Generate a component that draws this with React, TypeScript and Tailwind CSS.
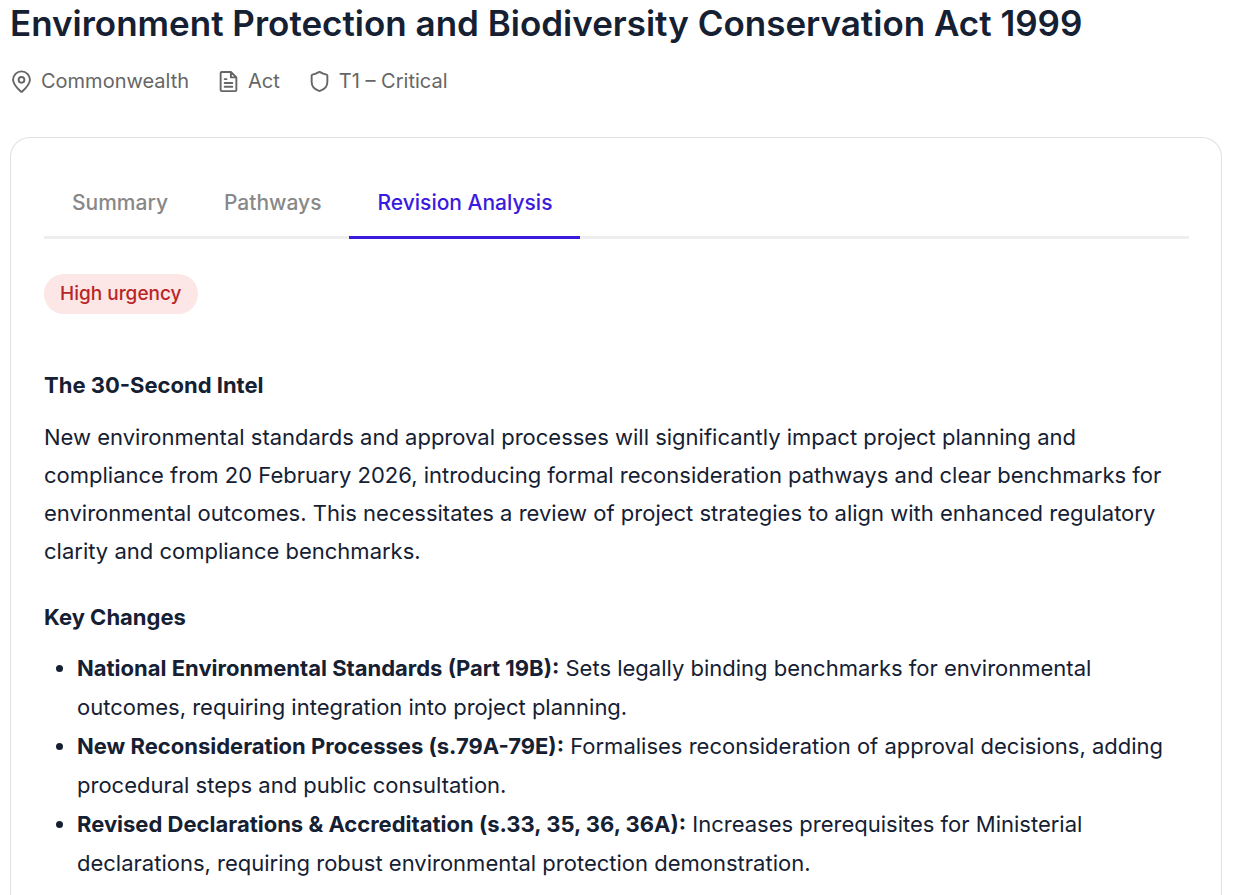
import type { ReactNode } from "react";

function Icon({ children }: { children: ReactNode }) {
  return (
    <svg
      viewBox="0 0 24 24"
      className="size-[23px] shrink-0"
      fill="none"
      stroke="currentColor"
      strokeWidth="2"
      strokeLinecap="round"
      strokeLinejoin="round"
      aria-hidden="true"
    >
      {children}
    </svg>
  );
}

const meta = [
  {
    label: "Commonwealth",
    icon: (
      <Icon>
        <path d="M20.800 10.200c0 4.800-5.400 9.800-8.100 12.200a1 1 0 0 1-1.400 0C8.600 20 3.200 15 3.200 10.200a8.800 8.800 0 0 1 17.600 0Z" />
        <circle cx="12" cy="10.300" r="3" />
      </Icon>
    ),
  },
  {
    label: "Act",
    icon: (
      <Icon>
        <path d="M14.500 2H5a1.200 1.200 0 0 0-1.200 1.200v17.600A1.200 1.200 0 0 0 5 22h14a1.200 1.200 0 0 0 1.200-1.200V7.700L14.500 2v5.700h5.700M8 9.500h2M8 13.500h8M8 17.500h8" />
      </Icon>
    ),
  },
  {
    label: "T1 – Critical",
    icon: (
      <Icon>
        <path d="M20.200 12.500c0 5-3.700 7.900-7.700 9.300a1.500 1.500 0 0 1-1 0c-4-1.400-7.700-4.300-7.700-9.300V5.800a1 1 0 0 1 .8-1C7 4.300 9.200 3.500 11.300 2.200a1.300 1.300 0 0 1 1.400 0c2.100 1.300 4.300 2.100 6.700 2.600a1 1 0 0 1 .8 1Z" />
      </Icon>
    ),
  },
];

const tabs = ["Summary", "Pathways", "Revision Analysis"];

const changes = [
  {
    title: "National Environmental Standards (Part 19B):",
    text: "Sets legally binding benchmarks for environmental outcomes, requiring integration into project planning.",
  },
  {
    title: "New Reconsideration Processes (s.79A-79E):",
    text: "Formalises reconsideration of approval decisions, adding procedural steps and public consultation.",
  },
  {
    title: "Revised Declarations & Accreditation (s.33, 35, 36, 36A):",
    text: "Increases prerequisites for Ministerial declarations, requiring robust environmental protection demonstration.",
  },
];

export default function App() {
  return (
    <main className="h-screen overflow-hidden bg-white pl-[10px] pr-5 font-['Inter',sans-serif] text-[#152033]">
      <h1 className="text-[35px] leading-[46px] font-semibold">
        Environment Protection and Biodiversity Conservation Act 1999
      </h1>
      <ul className="mt-5 flex gap-7 text-[20px] leading-[30px] text-[#666]">
        {meta.map(({ icon, label }) => (
          <li key={label} className="flex items-center gap-2">
            {icon}
            {label}
          </li>
        ))}
      </ul>

      <section className="mt-[41px] rounded-t-[20px] border border-b-0 border-[#e0e0e0] pt-7 pr-8 pb-10 pl-[33px]">
        <div role="tablist" className="flex border-b-3 border-[#eee]">
          {tabs.map((tab) => (
            <button
              key={tab}
              type="button"
              role="tab"
              aria-selected={tab === "Revision Analysis"}
              className="-mb-[3px] border-b-3 border-transparent px-7 pt-[21px] pb-[17px] text-[21px] leading-[32px] font-medium text-[#888] aria-selected:border-[#3b1ae0] aria-selected:text-[#3b1ae0]"
            >
              {tab}
            </button>
          ))}
        </div>

        <div role="tabpanel" className="pt-[35px]">
          <span className="flex h-10 w-fit items-center rounded-full bg-[#fce6e6] px-4 text-[19px] font-medium text-[#b92525]">
            High urgency
          </span>

          <h2 className="mt-[52px] text-[22px] leading-[38px] font-bold">The 30-Second Intel</h2>
          <p className="mt-[14px] text-[22px] leading-[38px]">
            New environmental standards and approval processes will significantly impact project planning and
            compliance from 20 February 2026, introducing formal reconsideration pathways and clear benchmarks for
            environmental outcomes. This necessitates a review of project strategies to align with enhanced regulatory
            clarity and compliance benchmarks.
          </p>

          <h2 className="mt-7 text-[22px] leading-[38px] font-bold">Key Changes</h2>
          <ul className="mt-[13px] list-disc pl-[33px] text-[22px] leading-[39px]">
            {changes.map(({ title, text }) => (
              <li key={title}>
                <strong className="font-bold">{title}</strong> {text}
              </li>
            ))}
          </ul>
        </div>
      </section>
    </main>
  );
}
